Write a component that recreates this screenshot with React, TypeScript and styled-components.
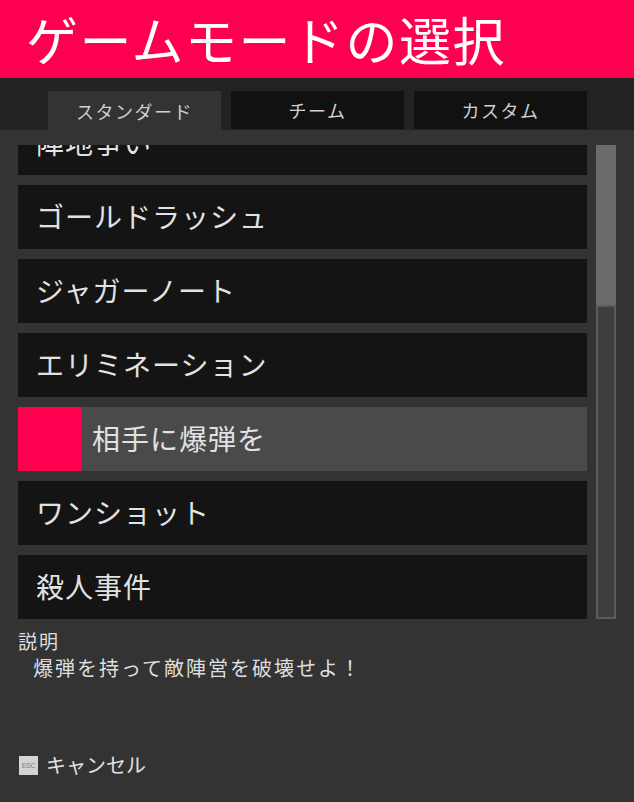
import React, { useLayoutEffect, useRef } from "react";
import styled, { createGlobalStyle } from "styled-components";

const Global = createGlobalStyle`
  html, body { margin: 0; padding: 0; background: #333333; }
  body { font-family: "Noto Sans CJK JP", "Noto Sans", sans-serif; }
  * { box-sizing: border-box; }
`;

const Screen = styled.div`
  width: 634px;
  height: 802px;
  display: flex;
  flex-direction: column;
  background: #333333;
  overflow: hidden;
`;

const Header = styled.header`
  height: 78px;
  flex: none;
  background: #ff0050;
  display: flex;
  align-items: center;
  padding-left: 26px;
`;

const Title = styled.h1`
  margin: 0;
  color: #ffffff;
  font-size: 52px;
  font-weight: 400;
  letter-spacing: 1.5px;
  line-height: 1;
`;

const TabBar = styled.nav`
  height: 52px;
  flex: none;
  background: #222222;
  display: flex;
  align-items: flex-end;
  gap: 10px;
  padding-left: 48px;
`;

const Tab = styled.div<{ $active?: boolean }>`
  width: 173px;
  height: ${(p) => (p.$active ? "39px" : "38px")};
  margin-bottom: ${(p) => (p.$active ? "0" : "1px")};
  background: ${(p) => (p.$active ? "#333333" : "#111111")};
  color: #cfcfcf;
  font-size: 18px;
  letter-spacing: 1.5px;
  display: flex;
  align-items: center;
  justify-content: center;
`;

const Panel = styled.main`
  flex: 1;
  display: flex;
  flex-direction: column;
  padding: 15px 18px 0 18px;
`;

const ListArea = styled.div`
  display: flex;
  gap: 9px;
  height: 474px;
  flex: none;
`;

const Viewport = styled.div`
  width: 569px;
  height: 474px;
  overflow-y: scroll;
  scrollbar-width: none;
  &::-webkit-scrollbar { display: none; }
`;

const List = styled.ul`
  margin: 0;
  padding: 0;
  list-style: none;
  display: flex;
  flex-direction: column;
  gap: 10px;
`;

const Item = styled.li<{ $selected?: boolean }>`
  height: 64px;
  flex: none;
  display: flex;
  align-items: center;
  gap: 10px;
  padding-left: ${(p) => (p.$selected ? "0" : "18px")};
  padding-bottom: 2px;
  background: ${(p) => (p.$selected ? "#4a4a4a" : "#141414")};
  color: #e2e2e2;
  font-size: 28px;
  letter-spacing: 1px;
`;

const Marker = styled.span`
  width: 64px;
  height: 64px;
  margin-bottom: -2px;
  flex: none;
  background: #ff0050;
`;

const ScrollTrack = styled.div`
  width: 20px;
  height: 474px;
  border: 2px solid #5c5c5c;
  background: #3e3e3e;
  display: flex;
  flex-direction: column;
`;

const ScrollThumb = styled.div`
  height: 162px;
  margin: -2px -2px 0 -2px;
  background: #6b6b6b;
  border-bottom: 2px solid #5a5a5a;
`;

const Description = styled.section`
  margin-top: 9px;
  color: #dedede;
`;

const Label = styled.div`
  font-size: 19px;
  line-height: 26px;
  letter-spacing: 2px;
`;

const Body = styled.div`
  font-size: 20px;
  line-height: 28px;
  padding-left: 15px;
  letter-spacing: 2px;
`;

const Footer = styled.footer`
  margin-top: auto;
  height: 51px;
  display: flex;
  align-items: flex-start;
  gap: 8px;
  padding-left: 1px;
  color: #e2e2e2;
  font-size: 20px;
  line-height: 28px;
`;

const EscKey = styled.span`
  width: 19px;
  height: 19px;
  margin-top: 5px;
  background: #d4d4d4;
  color: #7a7a7a;
  font-family: "Liberation Sans", sans-serif;
  font-size: 7px;
  letter-spacing: -0.3px;
  display: flex;
  align-items: center;
  justify-content: center;
`;

const modes = [
  "陣地争い",
  "ゴールドラッシュ",
  "ジャガーノート",
  "エリミネーション",
  "相手に爆弾を",
  "ワンショット",
  "殺人事件",
  "キャプチャー",
  "サバイバル",
  "キングオブヒル",
  "タイムアタック",
];

export default function App() {
  const ref = useRef<HTMLDivElement>(null);
  useLayoutEffect(() => {
    if (ref.current) ref.current.scrollTop = 34;
  }, []);
  return (
    <>
      <Global />
      <Screen>
        <Header>
          <Title>ゲームモードの選択</Title>
        </Header>
        <TabBar>
          <Tab $active>スタンダード</Tab>
          <Tab>チーム</Tab>
          <Tab>カスタム</Tab>
        </TabBar>
        <Panel>
          <ListArea>
            <Viewport ref={ref}>
              <List>
                {modes.map((m) => {
                  const sel = m === "相手に爆弾を";
                  return (
                    <Item key={m} $selected={sel}>
                      {sel && <Marker />}
                      {m}
                    </Item>
                  );
                })}
              </List>
            </Viewport>
            <ScrollTrack>
              <ScrollThumb />
            </ScrollTrack>
          </ListArea>
          <Description>
            <Label>説明</Label>
            <Body>爆弾を持って敵陣営を破壊せよ！</Body>
          </Description>
          <Footer>
            <EscKey>ESC</EscKey>
            キャンセル
          </Footer>
        </Panel>
      </Screen>
    </>
  );
}
